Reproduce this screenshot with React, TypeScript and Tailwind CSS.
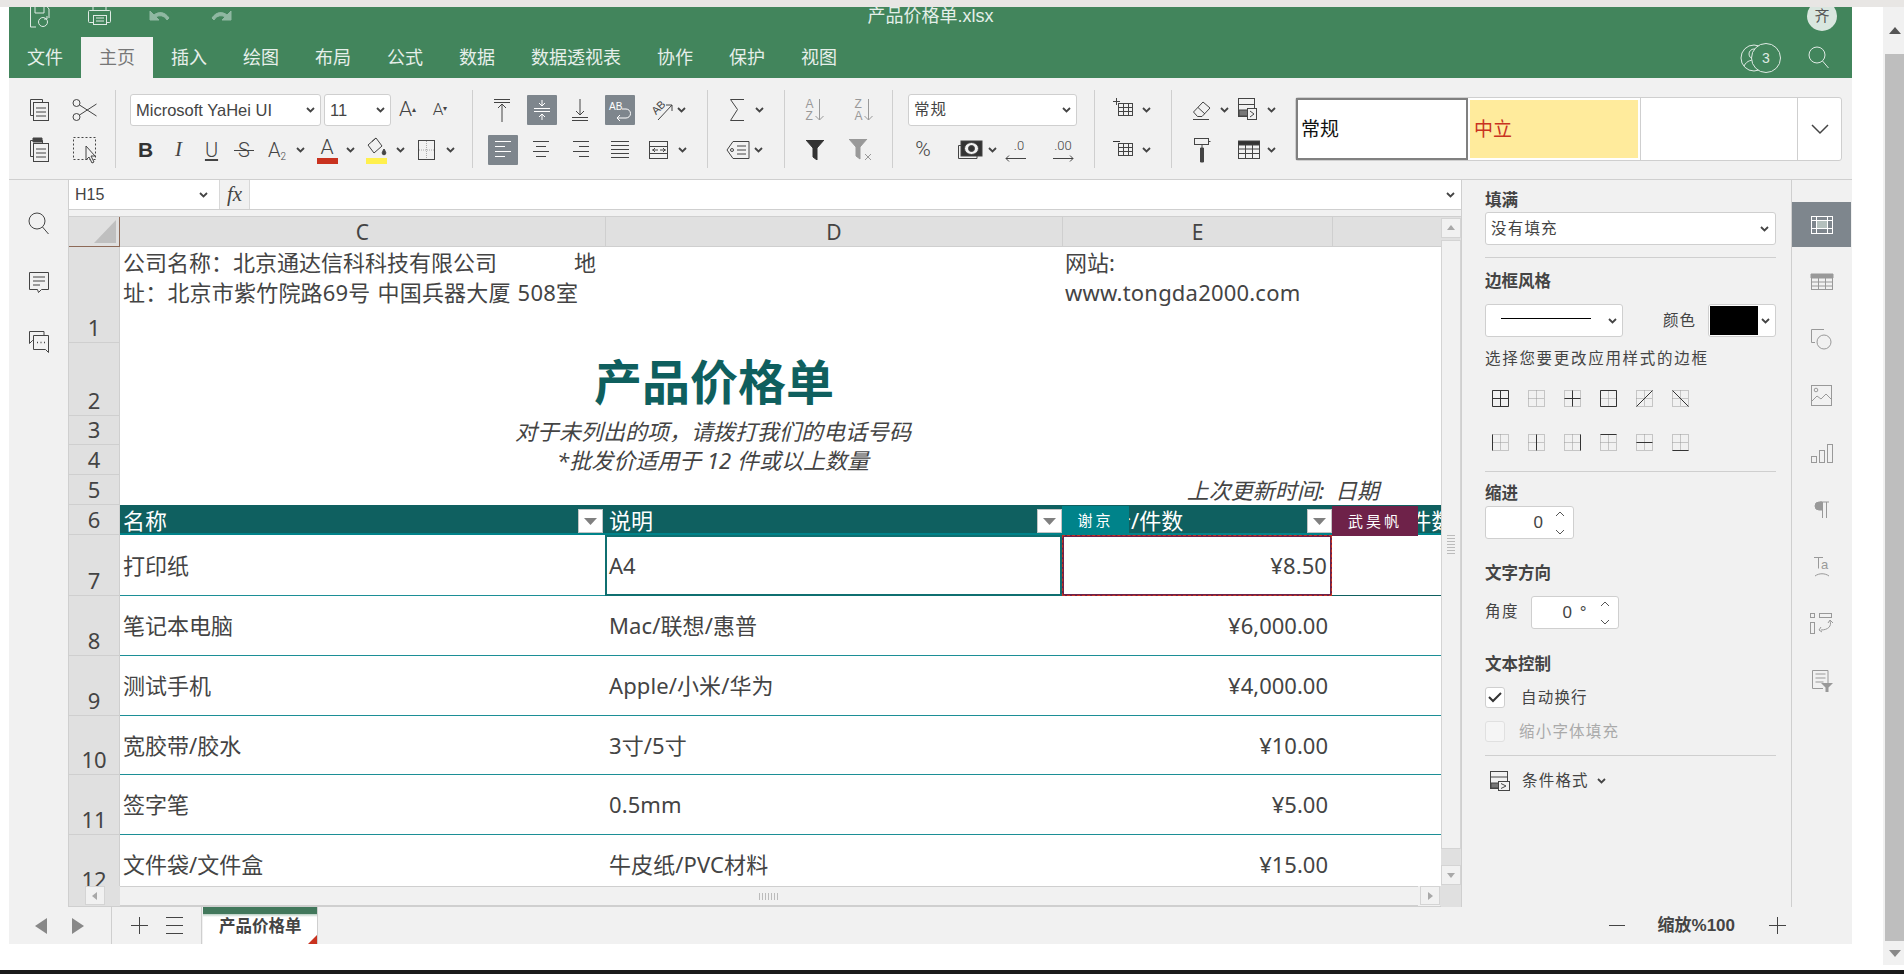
import React from 'react';

const CELL_FONT = "font-['Noto_Sans','Noto_Sans_CJK_SC',sans-serif]";
const THIN = "font-['Roboto',sans-serif] font-light";

type IconProps = { w?: number; h?: number; c?: string; children: React.ReactNode };

function Ico({ w = 22, h = 22, c = '#444', children }: IconProps) {
  return (
    <svg width={w} height={h} viewBox={`0 0 ${w} ${h}`} fill="none" stroke={c} strokeWidth={1} className="shrink-0">
      {children}
    </svg>
  );
}

function Chev() {
  return (
    <span className="flex w-[12px] justify-center">
      <svg width="9" height="6" viewBox="0 0 9 6" fill="none" stroke="#444" strokeWidth={1.8}>
        <path d="M1 1l3.5 3.5L8 1" />
      </svg>
    </span>
  );
}

function Tool({ className, active, children }: { className: string; active?: boolean; children: React.ReactNode }) {
  return (
    <div className={`flex h-[30px] shrink-0 items-center justify-center rounded-[1px] ${active ? 'bg-[#7e868d]' : ''} ${className}`}>
      {children}
    </div>
  );
}

function Sep() {
  return <div className="h-[78px] w-px shrink-0 bg-[#cfcfcf]" />;
}

function Row({ className = '', children }: { className?: string; children: React.ReactNode }) {
  return <div className={`flex h-[40px] items-center ${className}`}>{children}</div>;
}

function Select({ className, text, textClass = '' }: { className: string; text: string; textClass?: string }) {
  return (
    <div className={`flex items-center justify-between rounded-[3px] border border-[#cfcfcf] bg-white ${className}`}>
      <span className={`text-[#444] ${textClass}`}>{text}</span>
      <Chev />
    </div>
  );
}

const grid = (x = 0) => (
  <>
    <rect x={x + 3.5} y="5.5" width="14" height="12" />
    <path d={`M${x + 8.5} 5.5v12M${x + 13.5} 5.5v12M${x + 3.5} 9.5h14M${x + 3.5} 13.5h14`} />
  </>
);

function BorderIcon({ d }: { d: string }) {
  return (
    <svg width="17" height="17" viewBox="0 0 17 17" fill="none" className="shrink-0">
      <path d="M.5.5h16v16H.5zM8.5.5v16M.5 8.5h16" stroke="#999" strokeDasharray="1 1" />
      <path d={d} stroke="#333" />
    </svg>
  );
}

function PanelLabel({ className = '', children }: { className?: string; children: React.ReactNode }) {
  return <div className={`h-[20px] text-[16.5px] font-bold leading-[20px] text-[#444] ${className}`}>{children}</div>;
}

function Spin({ className, value }: { className: string; value: string }) {
  return (
    <div className={`flex h-[33px] items-center justify-end rounded-[3px] border border-[#cfcfcf] bg-white ${className}`}>
      <span className="text-[17px] text-[#444]">{value}</span>
      <svg width="10" height="26" viewBox="0 0 10 26" fill="none" stroke="#555" className="ml-[12px] mr-[8px]">
        <path d="M1 6l4-4 4 4M1 20l4 4 4-4" />
      </svg>
    </div>
  );
}

function ScrollBtn({ className = '', d }: { className?: string; d: string }) {
  return (
    <div className={`flex items-center justify-center border border-[#d4d4d4] bg-[#f1f1f1] ${className}`}>
      <svg width="12" height="12" viewBox="0 0 12 12" fill="#a8a8a8">
        <path d={d} />
      </svg>
    </div>
  );
}

const RAIL = [
  <Ico w={24} h={20} c="#fff"><rect x="1.5" y="1.5" width="21" height="17" /><rect x="6.5" y="5.5" width="11" height="8" fill="#b4c0bd" stroke="none" /><path d="M1.5 5.5h21M1.5 13.5h21M6.5 1.5v17M17.5 1.5v17" /></Ico>,
  <Ico w={24} h={18} c="#999"><rect x="1.5" y="1.5" width="21" height="15" /><path d="M1 1h22v4H1z" fill="#999" /><path d="M1.5 9h21M1.5 13h21M8.5 5v12M15.5 5v12" /></Ico>,
  <Ico w={24} h={22} c="#999"><path d="M14 1.5H1.5v13H5" /><circle cx="14" cy="14" r="7" /></Ico>,
  <Ico w={22} h={22} c="#999"><rect x=".5" y=".5" width="20" height="20" /><circle cx="5" cy="5" r="1.8" /><path d="M1 16l5-5 4 3 5-5 5 5" /></Ico>,
  <Ico w={24} h={20} c="#999"><rect x="1.5" y="13.5" width="5" height="6" /><rect x="9.5" y="7.5" width="5" height="12" /><rect x="17.5" y="1.5" width="5" height="18" /></Ico>,
  <Ico w={16} h={18} c="#999"><path d="M8 1H5a4 4 0 000 8h3z" fill="#999" /><path d="M8.5 1v16M12.5 1v16M6 1h9" /></Ico>,
  <Ico w={18} h={22} c="#999"><path d="M1 1.5h9M5.5 1.5v11" /><text x="8" y="13" fontSize="13" fill="#999" stroke="none" fontFamily="Liberation Sans">a</text><path d="M2 20c4-3 10-3 14 0" /></Ico>,
  <Ico w={24} h={22} c="#999"><rect x=".5" y=".5" width="4" height="4" /><rect x=".5" y="9.5" width="4" height="11" /><rect x="9.5" y=".5" width="12" height="4" /><path d="M20 8c2 5-2 9-9 9M11 14l-2 3 3 2M18 10l2-3 3 3" /></Ico>,
  <Ico w={22} h={24} c="#999"><path d="M17 15V1.5H1.5v18H12M4.5 5h10M4.5 9h10M4.5 13h8" /><path d="M10 14h12l-4.5 4.5V23h-3v-4.5z" fill="#999" stroke="none" /></Ico>,
];

const DATA_ROWS = [
  { n: 8, h: 'h-[60px]', a: '笔记本电脑', b: 'Mac/联想/惠普', c: '¥6,000.00' },
  { n: 9, h: 'h-[60px]', a: '测试手机', b: 'Apple/小米/华为', c: '¥4,000.00' },
  { n: 10, h: 'h-[59px]', a: '宽胶带/胶水', b: '3寸/5寸', c: '¥10.00' },
  { n: 11, h: 'h-[60px]', a: '签字笔', b: '0.5mm', c: '¥5.00' },
  { n: 12, h: 'h-[60px]', a: '文件袋/文件盒', b: '牛皮纸/PVC材料', c: '¥15.00' },
];

function RowHead({ n }: { n: number }) {
  return (
    <div className="flex h-full w-[51px] shrink-0 items-end justify-center border-b border-r border-[#cfcfcf] bg-[#e0e0e0] text-[22px] leading-[30px] text-[#444]">
      {n}
    </div>
  );
}

function FilterBtn() {
  return (
    <div className="flex h-[24px] w-[25px] shrink-0 items-center justify-center border border-[#c4c4c4] bg-white">
      <svg width="13" height="7" viewBox="0 0 13 7" fill="#808080">
        <path d="M0 0h13L6.5 7z" />
      </svg>
    </div>
  );
}

function Ribbon() {
  return (
    <div className="flex h-[102px] border-b border-[#cfcfcf] bg-[#f1f1f1] pt-[12px]">
      {/* clipboard */}
      <div className="w-[106px] shrink-0 pl-[7px]">
        <Row>
          <Tool className="w-[46px]"><Ico w={21} h={24}><path d="M4.5 17.5h-3v-16h12v3" /><rect x="4.5" y="4.5" width="15" height="18" /><path d="M7 10h10M7 14h10M7 18h10" /></Ico></Tool>
          <Tool className="w-[46px]"><Ico w={26} h={24}><circle cx="4.5" cy="5" r="3.5" /><circle cx="4.5" cy="19" r="3.5" /><path d="M7.5 7l17 11M7.5 17l17-11" /></Ico></Tool>
        </Row>
        <Row>
          <Tool className="w-[46px]"><Ico w={21} h={26}><path d="M4.5 19.5h-3v-16h12v3" /><rect x="4.5" y="6.5" width="15" height="18" /><path d="M7 12h10M7 16h10M7 20h10" /><path d="M4 1h9v4H4z" fill="#444" /></Ico></Tool>
          <Tool className="w-[46px]"><Ico w={26} h={28}><rect x="1.5" y="1.5" width="22" height="22" strokeDasharray="2 2" /><path d="M14 10v14l3-3 3 6 2-1-3-6h4z" fill="#f1f1f1" /></Ico></Tool>
        </Row>
      </div>
      <Sep />
      {/* font */}
      <div className="w-[356px] shrink-0">
        <Row className="pl-[14px]">
          <Select className="h-[32px] w-[191px] pl-[5px] pr-[4px]" text="Microsoft YaHei UI" textClass="text-[16.5px]" />
          <Select className="ml-[3px] h-[32px] w-[67px] pl-[5px] pr-[4px]" text="11" textClass="text-[16.5px]" />
          <Tool className="w-[33px]"><span className={`text-[21px] text-[#444] ${THIN}`}>A<sup className="text-[8px]">▴</sup></span></Tool>
          <Tool className="w-[32px]"><span className={`text-[17px] text-[#444] ${THIN}`}>A<sup className="text-[8px]">▾</sup></span></Tool>
        </Row>
        <Row className="pl-[13px]">
          <Tool className="w-[33px]"><span className="text-[21px] font-bold text-[#333]">B</span></Tool>
          <Tool className="w-[33px]"><span className="font-['Liberation_Serif',serif] text-[21px] italic text-[#444]">I</span></Tool>
          <Tool className="w-[33px]"><span className={`text-[20px] text-[#444] underline underline-offset-2 ${THIN}`}>U</span></Tool>
          <Tool className="relative w-[32px]">
            <span className={`text-[20px] text-[#444] ${THIN}`}>S</span>
            <div className="absolute left-[6px] right-[6px] top-[15px] h-px bg-[#444]" />
          </Tool>
          <Tool className="w-[34px]"><span className={`text-[20px] text-[#444] ${THIN}`}>A<sub className="text-[10px]">2</sub></span></Tool>
          <Chev />
          <Tool className="ml-[4px] w-[34px]">
            <div className="flex flex-col items-center">
              <span className={`h-[21px] text-[21px] leading-[21px] text-[#444] ${THIN}`}>A</span>
              <div className="h-[6px] w-[21px] bg-[#c9321f]" />
            </div>
          </Tool>
          <Chev />
          <Tool className="ml-[2px] w-[36px]">
            <div className="flex flex-col items-center">
              <Ico w={24} h={22}><path d="M4 9l8-7 6 8-8 7z" /><path d="M8 5.5L12 2" /><path d="M20 13c-1.2 2-1.8 3-1.8 4a1.8 1.8 0 003.6 0c0-1-.6-2-1.8-4z" fill="#444" /></Ico>
              <div className="h-[6px] w-[21px] bg-[#fff04d]" />
            </div>
          </Tool>
          <Chev />
          <Tool className="ml-[4px] w-[34px]"><Ico w={18} h={24}><rect x=".5" y="2.5" width="16" height="19" /><path d="M8.5 3v18M1 12h15" stroke="#aaa" strokeDasharray="1 1" /></Ico></Tool>
          <Chev />
        </Row>
      </div>
      <Sep />
      {/* alignment */}
      <div className="w-[234px] shrink-0">
        <Row className="pl-[14px]">
          <Tool className="w-[30px]"><Ico w={18} h={24}><path d="M1 1.5h16M1 4.5h16M9 24V6M5 10l4-4 4 4" /></Ico></Tool>
          <Tool active className="ml-[10px] w-[30px]"><Ico w={18} h={24} c="#fff"><path d="M1 10.5h16M1 13.5h16M9 2v6M6 5l3 3 3-3M9 22v-6M6 19l3-3 3 3" /></Ico></Tool>
          <Tool className="ml-[8px] w-[30px]"><Ico w={18} h={24}><path d="M1 19.5h16M1 22.5h16M9 1v16M5 13l4 4 4-4" /></Ico></Tool>
          <Tool active className="ml-[10px] w-[30px]"><Ico w={24} h={24} c="#fff"><text x="1" y="12" fontSize="10" fill="#fff" stroke="none" fontFamily="Liberation Sans">AB</text><path d="M14 11h4a4 4 0 010 9h-9M12 17l-3 3 3 3" /></Ico></Tool>
          <Tool className="ml-[15px] w-[26px]"><Ico w={26} h={26}><text x="2" y="15" fontSize="11" fill="#444" stroke="none" fontFamily="Liberation Sans" transform="rotate(-45 8 12)">AB</text><path d="M8 23L22 8M16 8h6v6" /></Ico></Tool>
          <div className="ml-[-1px]"><Chev /></div>
        </Row>
        <Row className="pl-[15px]">
          <Tool active className="w-[30px]"><Ico w={18} h={20} c="#fff"><path d="M1 1.5h16M1 6.5h10M1 11.5h16M1 16.5h10" /></Ico></Tool>
          <Tool className="ml-[8px] w-[30px]"><Ico w={18} h={20}><path d="M1 1.5h16M4 6.5h10M1 11.5h16M4 16.5h10" /></Ico></Tool>
          <Tool className="ml-[10px] w-[30px]"><Ico w={18} h={20}><path d="M1 1.5h16M7 6.5h10M1 11.5h16M7 16.5h10" /></Ico></Tool>
          <Tool className="ml-[9px] w-[30px]"><Ico w={18} h={20}><path d="M0 1.5h18M0 5.5h18M0 9.5h18M0 13.5h18M0 17.5h18" /></Ico></Tool>
          <Tool className="ml-[9px] w-[30px]"><Ico w={20} h={20}><rect x=".5" y="1.5" width="18" height="17" /><path d="M1 6.5h18M1 13.5h18" /><path d="M3 10h6M6 8l-2 2 2 2M11 10h6M14 8l2 2-2 2" /></Ico></Tool>
          <div className="ml-[2px]"><Chev /></div>
        </Row>
      </div>
      <Sep />
      {/* sum */}
      <div className="w-[76px] shrink-0 pl-[17px]">
        <Row>
          <Tool className="w-[24px]"><Ico w={16} h={24}><path d="M15 1.5H1.5l7 10-7 11H15" /></Ico></Tool>
          <div className="ml-[4px]"><Chev /></div>
        </Row>
        <Row>
          <Tool className="w-[26px]"><Ico w={24} h={20}><path d="M23 1.5H7L1 10l6 8.5h16z" /><circle cx="6" cy="10" r="1.5" /><path d="M11 6h9M11 10h9M11 14h9" /></Ico></Tool>
          <div className="ml-[1px]"><Chev /></div>
        </Row>
      </div>
      <Sep />
      {/* sort */}
      <div className="w-[107px] shrink-0 pl-[15px]">
        <Row>
          <Tool className="w-[30px]"><span className="flex flex-col text-[12px] leading-[12px] text-[#999]"><span>A</span><span>Z</span></span><Ico w={11} h={24} c="#999"><path d="M5.5 1v21M1.5 18l4 4 4-4" /></Ico></Tool>
          <Tool className="ml-[19px] w-[30px]"><span className="flex flex-col text-[12px] leading-[12px] text-[#999]"><span>Z</span><span>A</span></span><Ico w={11} h={24} c="#999"><path d="M5.5 1v21M1.5 18l4 4 4-4" /></Ico></Tool>
        </Row>
        <Row>
          <Tool className="w-[30px]"><Ico w={18} h={20} c="#333"><path d="M0 0h18l-7 8v12l-4-3V8z" fill="#333" /></Ico></Tool>
          <Tool className="ml-[16px] w-[30px]"><Ico w={24} h={22} c="#999"><path d="M0 0h18l-7 8v12l-4-3V8z" fill="#999" /><path d="M16 15l6 6M22 15l-6 6" /></Ico></Tool>
        </Row>
      </div>
      <Sep />
      {/* number */}
      <div className="w-[201px] shrink-0 pl-[15px]">
        <Row>
          <Select className="h-[32px] w-[169px] pl-[5px] pr-[4px]" text="常规" textClass="text-[15.5px] tracking-[1px]" />
        </Row>
        <Row>
          <Tool className="w-[30px]"><span className={`text-[21px] text-[#444] ${THIN}`}>%</span></Tool>
          <Tool className="ml-[13px] w-[38px]"><Ico w={26} h={22}><path d="M4 6.5H1.5v13H20V17" /><rect x="4" y="2" width="21" height="15" fill="#333" /><ellipse cx="14.5" cy="9.5" rx="7" ry="6" fill="#f1f1f1" /><circle cx="14.5" cy="9.5" r="3" fill="#333" /></Ico></Tool>
          <div className="ml-[-3px]"><Chev /></div>
          <Tool className="ml-[3px] w-[30px]"><div className="flex flex-col items-center"><span className={`h-[16px] pl-[6px] text-[13px] leading-[16px] text-[#444] ${THIN}`}>.0</span><Ico w={22} h={9}><path d="M1 4.5h20M4 1.5l-3 3 3 3" /></Ico></div></Tool>
          <Tool className="ml-[17px] w-[30px]"><div className="flex flex-col items-center"><span className={`h-[16px] text-[13px] leading-[16px] text-[#444] ${THIN}`}>.00</span><Ico w={22} h={9}><path d="M1 4.5h20M18 1.5l3 3-3 3" /></Ico></div></Tool>
        </Row>
      </div>
      <Sep />
      {/* insert */}
      <div className="w-[76px] shrink-0 pl-[16px]">
        <Row>
          <Tool className="w-[26px]"><Ico w={22} h={24}><path d="M0 3.5h7M3.5 0v7" />{grid(2)}</Ico></Tool>
          <div className="ml-[3px]"><Chev /></div>
        </Row>
        <Row>
          <Tool className="w-[26px]"><Ico w={22} h={24}><path d="M0 3.5h7" stroke="#333" />{grid(2)}</Ico></Tool>
          <div className="ml-[3px]"><Chev /></div>
        </Row>
      </div>
      <Sep />
      {/* format */}
      <div className="w-[124px] shrink-0 pl-[15px]">
        <Row>
          <Tool className="w-[30px]"><Ico w={20} h={20}><path d="M1.5 12L11 2l7 6-8 8.5H5.5zM6 7.5l7 6.5M1 19.5h16" /></Ico></Tool>
          <div className="ml-[1px]"><Chev /></div>
          <Tool className="ml-[6px] w-[24px]"><Ico w={20} h={24}><rect x=".5" y=".5" width="16" height="18" /><path d="M.5 6.5h16" /><path d="M1 12h15v6H1z" fill="#777" /><rect x="9.5" y="10.5" width="9" height="11" fill="#f1f1f1" /><path d="M12 13l4 3-4 3" /></Ico></Tool>
          <div className="ml-[5px]"><Chev /></div>
        </Row>
        <Row>
          <Tool className="w-[30px]"><Ico w={18} h={26}><rect x="1.5" y="1.5" width="14" height="6" /><path d="M15.5 4.5h2M9 7.5v4" /><path d="M7.5 11h3v14h-3z" fill="#444" /></Ico></Tool>
          <Tool className="ml-[20px] w-[24px]"><Ico w={22} h={20}><rect x=".5" y="1.5" width="21" height="17" /><path d="M0 1h22v4H0z" fill="#333" /><path d="M1 9h20M1 13.5h20M7.5 5v13M14.5 5v13" /></Ico></Tool>
          <div className="ml-[4px]"><Chev /></div>
        </Row>
      </div>
      {/* cell styles */}
      <div className="ml-[-1px] mt-[7px] flex h-[64px] w-[547px] shrink-0 rounded-[3px] border border-[#cfcfcf] bg-white">
        <div className="flex w-[172px] items-center border-2 border-[#808080] pl-[3px] pt-[3px] text-[19px] text-[#111]">常规</div>
        <div className="p-[2px]">
          <div className="flex h-full w-[168px] items-center bg-[#ffeb9c] pl-[4px] pt-[3px] text-[19px] text-[#c9321f]">中立</div>
        </div>
        <div className="flex-1 border-x border-[#cfcfcf]" />
        <div className="flex w-[43px] items-center justify-center">
          <svg width="18" height="11" viewBox="0 0 18 11" fill="none" stroke="#444" strokeWidth={1.5}>
            <path d="M1 1l8 8 8-8" />
          </svg>
        </div>
      </div>
    </div>
  );
}

function Sheet() {
  return (
    <div className={`flex min-h-0 flex-1 ${CELL_FONT}`}>
      <div className="flex min-w-0 flex-1 flex-col">
        <div className="min-h-0 flex-1 overflow-hidden bg-white">
          {/* column letters */}
          <div className="flex h-[30px] bg-[#e0e0e0] text-[21px] leading-[30px] text-[#444]">
            <div className="flex w-[51px] items-end justify-end border-b border-r border-[#8d6a58] pb-[3px] pr-[3px]">
              <svg width="22" height="23" viewBox="0 0 22 23" fill="#bfbfbf"><path d="M22 0v23H0z" /></svg>
            </div>
            <div className="w-[486px] border-b border-r border-[#cfcfcf] text-center">C</div>
            <div className="w-[457px] border-b border-r border-[#cfcfcf] text-center">D</div>
            <div className="w-[270px] border-b border-r border-[#cfcfcf] text-center">E</div>
            <div className="flex-1 border-b border-[#cfcfcf]" />
          </div>
          {/* row 1 */}
          <div className="flex h-[96px] text-[22px] leading-[30px] text-[#444]">
            <RowHead n={1} />
            <div className="w-[485px] shrink-0 pl-[3px] pt-[-1px]">
              <div className="flex justify-between pr-[9px]"><span>公司名称：北京通达信科科技有限公司</span><span>地</span></div>
              <div className="whitespace-nowrap tracking-[0.2px] [word-spacing:1px]">址：北京市紫竹院路69号 中国兵器大厦 508室</div>
            </div>
            <div className="w-[457px] shrink-0" />
            <div className="w-[270px] shrink-0 pl-[3px]">
              <div>网站:</div>
              <div className="tracking-[0.2px]">www.tongda2000.com</div>
            </div>
          </div>
          {/* row 2 */}
          <div className="flex h-[73px]">
            <RowHead n={2} />
            <div className="flex w-[1212px] shrink-0 items-center justify-center pr-[24px] pt-[5px] text-[48px] font-bold leading-none text-[#0f5f5e]">产品价格单</div>
          </div>
          {/* row 3 */}
          <div className="flex h-[29px]">
            <RowHead n={3} />
            <div className="flex w-[1212px] shrink-0 items-center justify-center pr-[26px] pt-[2px] text-[22px] italic text-[#444]">对于未列出的项，请拨打我们的电话号码</div>
          </div>
          {/* row 4 */}
          <div className="flex h-[30px]">
            <RowHead n={4} />
            <div className="flex w-[1212px] shrink-0 items-center justify-center pr-[26px] pt-[1px] text-[22px] italic text-[#444]">*批发价适用于 12 件或以上数量</div>
          </div>
          {/* row 5 */}
          <div className="flex h-[30px]">
            <RowHead n={5} />
            <div className="flex w-[1259px] shrink-0 items-center justify-end text-[22px] italic text-[#444] [word-spacing:5px]">上次更新时间: 日期</div>
          </div>
          {/* row 6, table head */}
          <div className="relative flex h-[30px] text-[22px] leading-[28px] text-white">
            <RowHead n={6} />
            <div className="flex w-[485px] shrink-0 justify-between border-b-2 border-[#00838a] bg-[#0f6060] pl-[3px] pr-[2px] pt-[1px]"><span>名称</span><div className="mt-[3px]"><FilterBtn /></div></div>
            <div className="flex w-[457px] shrink-0 justify-between border-b-2 border-[#00838a] bg-[#0f6060] pl-[4px] pt-[1px]"><span>说明</span><div className="mt-[3px]"><FilterBtn /></div></div>
            <div className="flex w-[270px] shrink-0 justify-between border-b-2 border-[#00838a] bg-[#0f6060] pl-[3px] pt-[1px]"><span>零售价/件数</span><div className="mt-[3px]"><FilterBtn /></div></div>
            <div className="min-w-0 flex-1 overflow-hidden whitespace-nowrap border-b-2 border-[#00838a] bg-[#0f6060] pl-[3px] pt-[1px]">批发价/件数</div>
            <div className="absolute left-[993px] top-[1px] flex h-[28px] w-[67px] items-center justify-center bg-[#00838a] text-[15px] tracking-[3px]">谢京</div>
            <div className="absolute left-[1263px] top-[1px] flex h-[30px] w-[86px] items-center justify-center bg-[#6e2249] text-[15px] tracking-[3px]">武昊帆</div>
          </div>
          {/* row 7, selected cells */}
          <div className="flex h-[61px] text-[22px] text-[#444]">
            <RowHead n={7} />
            <div className="flex w-[485px] shrink-0 items-center border-b border-[#1c8f96] pl-[3px]">打印纸</div>
            <div className="flex w-[457px] shrink-0 items-center border-2 border-[#0f6f70] pl-[2px]">A4</div>
            <div className="relative flex w-[270px] shrink-0 items-center justify-end border-2 border-[#6e2249] pr-[3px] tracking-[0.1px]">
              ¥8.50
              <div className="absolute -inset-[2px] border border-dashed border-[#c9321f]" />
            </div>
            <div className="flex-1 border-b border-[#0f6060]" />
          </div>
          {DATA_ROWS.map((r) => (
            <div key={r.n} className={`flex text-[22px] text-[#444] ${r.h}`}>
              <RowHead n={r.n} />
              <div className="flex w-[485px] shrink-0 items-center border-b border-[#1c8f96] pl-[3px]">{r.a}</div>
              <div className="flex w-[457px] shrink-0 items-center border-b border-[#1c8f96] pl-[4px] tracking-[0.1px]">{r.b}</div>
              <div className="flex w-[270px] shrink-0 items-center justify-end border-b border-[#1c8f96] pr-[4px]">{r.c}</div>
              <div className="flex-1 border-b border-[#1c8f96]" />
            </div>
          ))}
        </div>
        {/* horizontal scrollbar */}
        <div className="flex h-[21px] shrink-0 border-b border-[#cfcfcf] bg-[#f1f1f1]">
          <div className="flex w-[51px] items-start justify-center bg-[#e0e0e0]">
            <ScrollBtn className="h-[19px] w-[20px]" d="M8 2v8L3 6z" />
          </div>
          <div className="flex flex-1 items-center justify-center border-y border-[#cfcfcf]">
            <div className="h-[7px] w-[20px] bg-[repeating-linear-gradient(90deg,#bbb_0,#bbb_1px,transparent_1px,transparent_3px)]" />
          </div>
          <ScrollBtn className="ml-[2px] h-[19px] w-[20px]" d="M4 2v8l5-4z" />
          <div className="w-px bg-[#e0e0e0]" />
        </div>
      </div>
      {/* vertical scrollbar */}
      <div className="flex w-[20px] shrink-0 flex-col bg-[#e0e0e0] pb-[22px] pt-px">
        <ScrollBtn className="h-[20px]" d="M2 8h8L6 3z" />
        <div className="mt-[2px] flex h-[609px] items-center justify-center border border-[#d4d4d4] bg-[#f1f1f1]">
          <div className="h-[19px] w-[8px] bg-[repeating-linear-gradient(0deg,#bbb_0,#bbb_1px,transparent_1px,transparent_3px)]" />
        </div>
        <ScrollBtn className="mt-auto h-[20px]" d="M2 4h8L6 9z" />
      </div>
    </div>
  );
}

function SidePanel() {
  return (
    <div className="w-[330px] shrink-0 border-l border-[#cfcfcf] pl-[23px] pr-[15px] pt-[10px]">
      <PanelLabel>填满</PanelLabel>
      <Select className="mt-[2px] h-[33px] w-[291px] pl-[5px] pr-[5px]" text="没有填充" textClass="text-[15.5px] tracking-[1.2px]" />
      <div className="mt-[12px] h-px bg-[#cfcfcf]" />
      <PanelLabel className="mt-[13px]">边框风格</PanelLabel>
      <div className="mt-[13px] flex h-[33px] items-center text-[15.5px] tracking-[1px] text-[#444]">
        <div className="flex h-full w-[138px] items-center justify-between rounded-[3px] border border-[#cfcfcf] bg-white pl-[15px] pr-[4px]">
          <div className="mb-[4px] h-px w-[90px] bg-black" />
          <Chev />
        </div>
        <span className="ml-[40px]">颜色</span>
        <div className="ml-[12px] flex h-full flex-1 items-center rounded-[3px] border border-[#cfcfcf] bg-white pl-px">
          <div className="h-[29px] w-[48px] bg-black" />
          <div className="ml-[1px]"><Chev /></div>
        </div>
      </div>
      <div className="mt-[12px] h-[20px] whitespace-nowrap text-[15.5px] leading-[20px] tracking-[1.7px] text-[#444]">选择您要更改应用样式的边框</div>
      <div className="ml-[7px] mt-[21px] flex gap-[19px]">
        <BorderIcon d="M.5.5h16v16H.5zM8.5.5v16M.5 8.5h16" />
        <BorderIcon d="" />
        <BorderIcon d="M8.5.5v16M.5 8.5h16" />
        <BorderIcon d="M.5.5h16v16H.5z" />
        <BorderIcon d="M.5 16.5l16-16" />
        <BorderIcon d="M.5.5l16 16" />
      </div>
      <div className="ml-[7px] mt-[27px] flex gap-[19px]">
        <BorderIcon d="M.5.5v16" />
        <BorderIcon d="M8.5.5v16" />
        <BorderIcon d="M16.5.5v16" />
        <BorderIcon d="M.5.5h16" />
        <BorderIcon d="M.5 8.5h16" />
        <BorderIcon d="M.5 16.5h16" />
      </div>
      <div className="mt-[20px] h-px bg-[#cfcfcf]" />
      <PanelLabel className="mt-[11px]">缩进</PanelLabel>
      <Spin className="mt-[3px] w-[89px]" value="0" />
      <PanelLabel className="mt-[24px]">文字方向</PanelLabel>
      <div className="mt-[13px] flex h-[33px] items-center text-[15.5px] leading-[20px] tracking-[1.5px] text-[#444]">
        <span className="mt-[-2px]">角度</span>
        <Spin className="ml-[12px] w-[88px]" value="0 °" />
      </div>
      <PanelLabel className="mt-[25px]">文本控制</PanelLabel>
      <div className="mt-[13px] flex h-[21px] items-center text-[15.5px] leading-[20px] tracking-[1.2px] text-[#444]">
        <div className="flex h-[21px] w-[20px] items-center justify-center rounded-[3px] border border-[#cfcfcf] bg-white">
          <svg width="14" height="11" viewBox="0 0 14 11" fill="none" stroke="#333" strokeWidth={2}>
            <path d="M1 5l4 4 8-8" />
          </svg>
        </div>
        <span className="ml-[16px]">自动换行</span>
      </div>
      <div className="mt-[13px] flex h-[21px] items-center text-[15.5px] leading-[20px] tracking-[1.2px] text-[#aaa]">
        <div className="h-[21px] w-[20px] rounded-[3px] border border-[#e0e0e0] bg-[#f5f5f5]" />
        <span className="ml-[14px]">缩小字体填充</span>
      </div>
      <div className="mt-[13px] h-px bg-[#cfcfcf]" />
      <div className="ml-[5px] mt-[15px] flex h-[20px] items-center text-[15.5px] leading-[20px] tracking-[1.2px] text-[#444]">
        <Ico w={20} h={20}><rect x=".5" y=".5" width="17" height="17" /><path d="M.5 6h17" /><path d="M1 12h16v5H1z" fill="#777" /><rect x="8.5" y="10.5" width="11" height="9" fill="#f1f1f1" /><path d="M11 12.5l5 2.5-5 2.5" /></Ico>
        <span className="ml-[12px]">条件格式</span>
        <div className="ml-[7px]"><Chev /></div>
      </div>
    </div>
  );
}

export default function App() {
  return (
    <div className="flex h-[974px] w-full flex-col overflow-hidden bg-white font-['Liberation_Sans','Noto_Sans_CJK_SC',sans-serif]">
      <div className="h-[7px] shrink-0 bg-[#e8e6e4]" />
      <div className="flex h-[963px] shrink-0">
        <div className="ml-[9px] flex h-[937px] w-[1843px] shrink-0 flex-col bg-[#f1f1f1]">
          {/* title bar */}
          <div className="shrink-0 bg-[#42855c] text-white">
            <div className="grid h-[30px] grid-cols-[1fr_auto_1fr] overflow-hidden">
              <div className="flex items-start pl-[20px]">
                <div className="mt-[-3px]">
                  <Ico w={22} h={24} c="#dfeae4"><path d="M7 23H1.5V1.5H17L20 5v9" /><path d="M6 2v7h9V2" /><circle cx="14" cy="18" r="4.5" /><path d="M18 12v3h-3" /></Ico>
                </div>
                <div className="ml-[36px] mt-[-4px]">
                  <Ico w={26} h={24} c="#dfeae4"><path d="M6 7V1.5h13V7" /><rect x="1.5" y="7.5" width="22" height="12" rx="1" /><rect x="6.5" y="12.5" width="13" height="9" fill="#42855c" /><path d="M9 15h8M9 18h8" /></Ico>
                </div>
                <div className="ml-[36px] mt-[3px]">
                  <Ico w={22} h={12} c="#8fb8a2"><path d="M1 1v9h9L7 7c3-2 8-2 11 3l2-2C16 2 10 1 5 5z" fill="#8fb8a2" /></Ico>
                </div>
                <div className="ml-[39px] mt-[3px]">
                  <Ico w={22} h={12} c="#8fb8a2"><path d="M21 1v9h-9l3-3c-3-2-8-2-11 3L2 8c4-6 10-7 15-3z" fill="#8fb8a2" /></Ico>
                </div>
              </div>
              <div className="h-[18px] text-[18px] leading-[18px] text-[#e4efe9]">产品价格单.xlsx</div>
              <div className="flex justify-end pr-[15px]">
                <div className="mt-[-6px] flex h-[30px] w-[30px] items-center justify-center rounded-full bg-[#d9e6df] text-[15px] text-[#555]">齐</div>
              </div>
            </div>
            <div className="flex h-[41px] items-stretch text-[18px] text-[#e6efea]">
              {['文件', '主页', '插入', '绘图', '布局', '公式', '数据', '数据透视表', '协作', '保护', '视图'].map((t) => (
                <div key={t} className={`flex items-center px-[18px] pt-[2px] ${t === '主页' ? 'bg-[#f1f1f1] text-[#777]' : ''}`}>
                  {t}
                </div>
              ))}
              <div className="ml-auto flex items-center pr-[22px]">
                <svg width="42" height="32" viewBox="0 0 42 32" fill="none" stroke="#dfeae4">
                  <circle cx="15" cy="16" r="13" />
                  <circle cx="15" cy="12" r="5" />
                  <path d="M5 24c3-6 8-6 12-6" />
                  <circle cx="27" cy="16" r="14.5" fill="#42855c" />
                  <text x="27" y="21" fontSize="14" textAnchor="middle" fill="#dfeae4" stroke="none" fontFamily="Liberation Sans">3</text>
                </svg>
                <svg width="22" height="24" viewBox="0 0 22 24" fill="none" stroke="#dfeae4" className="ml-[27px]">
                  <circle cx="9" cy="9" r="8" />
                  <path d="M14.5 15l6 7" />
                </svg>
              </div>
            </div>
          </div>
          <Ribbon />
          {/* body */}
          <div className="flex min-h-0 flex-1">
            <div className="flex w-[60px] shrink-0 flex-col items-center gap-[35px] border-r border-[#cfcfcf] pt-[32px]">
              <Ico w={22} h={24}><circle cx="9" cy="9" r="8" /><path d="M14.5 15l6 7" /></Ico>
              <Ico w={22} h={24}><path d="M1.5 1.5h19v17h-7l-3 3-1-3h-8z" /><path d="M5 6h12M5 10h12M5 14h7" /></Ico>
              <Ico w={22} h={24}><path d="M16 5V1.5H1.5v12l3-3H5" /><path d="M5.5 5.5h15v17l-3-3h-12z" /><path d="M9 12.5h1M12.5 12.5h1M16 12.5h1" strokeWidth={1.6} /></Ico>
            </div>
            <div className="flex w-[1392px] shrink-0 flex-col">
              {/* formula bar */}
              <div className="flex h-[30px] shrink-0 border-b border-[#cfcfcf] bg-white">
                <div className="flex w-[150px] items-center justify-between pl-[6px] pr-[10px] text-[16px] text-[#444]">
                  H15
                  <Chev />
                </div>
                <div className="flex w-[31px] items-center justify-center border-x border-[#d8d8d8] bg-[#f1f1f1] font-['Liberation_Serif',serif] text-[21px] italic text-[#444]">fx</div>
                <div className="flex flex-1 items-center justify-end pr-[5px]"><Chev /></div>
              </div>
              <div className="h-[7px] shrink-0 border-b border-[#cfcfcf]" />
              <Sheet />
            </div>
            <SidePanel />
            <div className="flex w-[61px] shrink-0 flex-col gap-[12px] border-l border-[#cfcfcf] pt-[22px]">
              {RAIL.map((icon, i) => (
                <div key={i} className={`flex h-[45px] w-[59px] items-center justify-center ${i === 0 ? 'bg-[#7e868d]' : ''}`}>
                  {icon}
                </div>
              ))}
            </div>
          </div>
          {/* sheet tabs */}
          <div className="flex h-[37px] shrink-0 items-stretch bg-[#f1f1f1]">
            <div className="flex w-[103px] items-center border-r border-[#cfcfcf] pl-[26px]">
              <svg width="12" height="16" viewBox="0 0 12 16" fill="#888"><path d="M12 0v16L0 8z" /></svg>
              <svg width="12" height="16" viewBox="0 0 12 16" fill="#888" className="ml-[25px]"><path d="M0 0v16l12-8z" /></svg>
            </div>
            <div className="flex w-[90px] items-center gap-[18px] border-r border-[#cfcfcf] pl-[19px]">
              <Ico w={17} h={17}><path d="M8.5 0v17M0 8.5h17" /></Ico>
              <Ico w={17} h={17}><path d="M0 .5h17M0 8.5h17M0 16.5h17" /></Ico>
            </div>
            <div className="relative ml-px w-[115px] border-r border-[#cfcfcf] bg-white">
              <div className="h-[7px] bg-[#42785c]" />
              <div className="h-[3px] bg-gradient-to-b from-[#b7cdc1] to-white" />
              <div className="pl-[16px] text-[16.5px] font-bold leading-[18px] text-[#444]">产品价格单</div>
              <svg width="9" height="9" viewBox="0 0 9 9" fill="#c9321f" className="absolute bottom-0 right-0"><path d="M9 0v9H0z" /></svg>
            </div>
            <div className="ml-auto flex items-center pr-[66px]">
              <div className="h-px w-[16px] bg-[#444]" />
              <span className="ml-[33px] text-[17px] font-bold text-[#444]">缩放%100</span>
              <div className="ml-[34px]"><Ico w={17} h={17}><path d="M8.5 0v17M0 8.5h17" /></Ico></div>
            </div>
          </div>
        </div>
        {/* page scrollbar */}
        <div className="ml-[31px] flex h-[958px] w-[21px] shrink-0 flex-col bg-[#f1f1f1] pl-[2px]">
          <div className="flex h-[47px] items-center justify-center">
            <svg width="12" height="7" viewBox="0 0 12 7" fill="#555"><path d="M6 0l6 7H0z" /></svg>
          </div>
          <div className="h-[887px] bg-[#bebebe]" />
          <div className="flex flex-1 items-center justify-center">
            <svg width="12" height="7" viewBox="0 0 12 7" fill="#888"><path d="M0 0h12L6 7z" /></svg>
          </div>
        </div>
      </div>
      <div className="h-[4px] shrink-0 bg-[#1a1a1a]" />
    </div>
  );
}
